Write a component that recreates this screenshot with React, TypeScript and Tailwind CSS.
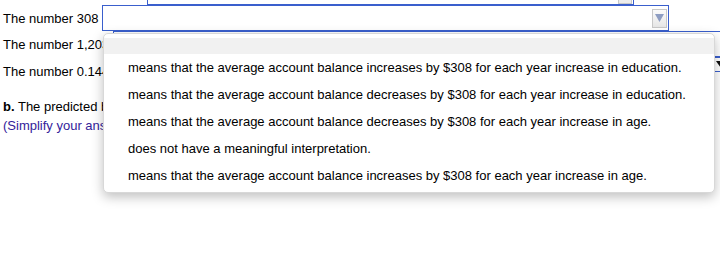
import React from "react";

const options = [
  "means that the average account balance increases by $308 for each year increase in education.",
  "means that the average account balance decreases by $308 for each year increase in education.",
  "means that the average account balance decreases by $308 for each year increase in age.",
  "does not have a meaningful interpretation.",
  "means that the average account balance increases by $308 for each year increase in age.",
];

function ArrowButton() {
  return (
    <div className="w-[15px] h-[19px] border border-[#c8c8c8] bg-gradient-to-b from-[#fbfbfb] to-[#e6e6e6] flex items-center justify-center">
      <svg width="9" height="8" viewBox="0 0 9 8">
        <polygon points="0,0 9,0 4.5,8" fill="#8e9dc2" />
      </svg>
    </div>
  );
}

export default function App() {
  return (
    <div className="relative w-[720px] h-[273px] bg-white overflow-hidden font-['Liberation_Sans',Arial,sans-serif] text-[13px] text-black leading-[15px]">
      {/* partial select above */}
      <div className="flex h-[5px]">
        <div className="ml-[147px] w-[487px] h-[5px] border-x border-b border-[#3a5fcd] flex justify-end items-end">
          <div className="w-[14px] h-[4px] mr-[1px] border-x border-b border-[#c8c8c8] bg-[#ececec]" />
        </div>
      </div>
      {/* row 1 */}
      <div className="flex items-center h-[26px]">
        <div className="w-[102px] shrink-0 pl-[3px] whitespace-nowrap overflow-hidden">The number 308</div>
        <div className="w-[567px] shrink-0 h-[26px] border border-[#3a5fcd] flex items-center justify-end pr-[1px]">
          <ArrowButton />
        </div>
      </div>
      {/* row 2 */}
      <div className="flex items-center h-[26px]">
        <div className="w-[113px] shrink-0 pl-[3px] whitespace-nowrap overflow-hidden">The number 1,203</div>
        <div className="w-[620px] shrink-0 h-[26px] border border-[#3a5fcd]" />
      </div>
      {/* row 3 */}
      <div className="flex items-start h-[26px]">
        <div className="w-[140px] shrink-0 pl-[3px] pt-[7px] whitespace-nowrap overflow-hidden">The number 0.144</div>
        <div className="w-[600px] shrink-0 h-[15px] border-y border-[#3a5fcd] flex items-center pl-[576px] pt-[1px]">
          <svg width="11" height="8" viewBox="0 0 11 8" className="shrink-0">
            <polygon points="0,0 11,0 5.5,8" fill="#111" />
          </svg>
        </div>
      </div>
      <div className="mt-[16px] pl-[3px] whitespace-nowrap">
        <span className="font-bold">b.</span> The predicted balance
      </div>
      <div className="mt-[4px] pl-[3px] text-[#33229a] whitespace-nowrap">(Simplify your answer.)</div>

      {/* dropdown */}
      <div className="absolute left-[103px] top-[33px] w-[612px] h-[160px] bg-white rounded-[5px] border border-[#d8d8d8] shadow-[0_4px_12px_rgba(0,0,0,0.25)] pt-[4px]">
        <div className="h-[16px] bg-[#f1f1f1]" />
        {options.map((o) => (
          <div key={o} className="h-[27px] flex items-center pl-[24px] whitespace-nowrap">
            {o}
          </div>
        ))}
      </div>
    </div>
  );
}
